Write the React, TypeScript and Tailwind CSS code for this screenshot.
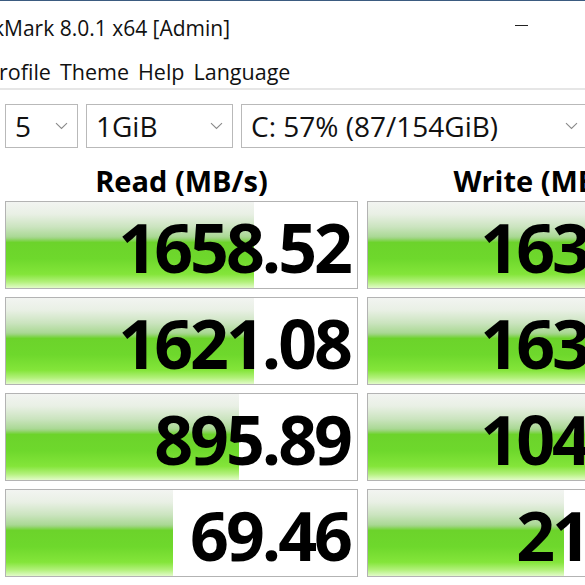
import React from 'react';

const ui = { fontFamily: '"Open Sans", "Noto Sans", sans-serif' };

interface Score {
  value: string;
  fill: number; // px width of the green bar
}

const readScores: Score[] = [
  { value: '1658.52', fill: 248 },
  { value: '1621.08', fill: 248 },
  { value: '895.89', fill: 233 },
  { value: '69.46', fill: 167 },
];

const writeScores: Score[] = [
  { value: '1634.87', fill: 351 },
  { value: '1632.15', fill: 351 },
  { value: '1048.73', fill: 351 },
  { value: '218.64', fill: 196 },
];

const Chevron = () => (
  <svg width="13" height="8" viewBox="0 0 13 8" className="shrink-0">
    <path d="M1 1.2 L6.5 6.5 L12 1.2" fill="none" stroke="#8a8a8a" strokeWidth="1.1" />
  </svg>
);

const Combo = ({ label, className }: { label: string; className: string }) => (
  <div
    className={`flex h-[44px] items-center justify-between border border-[#b9b9b9] bg-white pl-[9px] pr-[9px] ${className}`}
  >
    <span className="text-[28px] leading-none text-[#111]">{label}</span>
    <Chevron />
  </div>
);

const Cell = ({ score }: { score: Score }) => (
  <div className="relative flex h-[88px] w-[353px] items-center justify-end overflow-hidden border border-[#b3b3b3] bg-white">
    <div
      className="absolute inset-y-0 left-0 bg-[linear-gradient(to_bottom,#f2f4f1_0%,#e9f0e5_14%,#cbe4bf_29%,#abd996_40%,#9fd583_42%,#6cd32b_47%,#6ed82c_66%,#84e53a_84%,#b3f17c_93%,#e2fbc9_100%)]"
      style={{ width: score.fill }}
    />
    <span className="relative pr-[7px] pt-[4px] text-[68px] font-bold leading-none tracking-[-3px] text-black">
      {score.value}
    </span>
  </div>
);

export default function App() {
  return (
    <div className="relative h-[585px] w-[585px] overflow-hidden bg-white" style={ui}>
      <div className="h-px w-full bg-[#3b5b80]" />

      <div className="flex h-[49px] w-[585px] items-center justify-between pt-[6px]">
        <div className="flex items-center text-[21px] text-[#111]">
          <span className="inline-flex w-[4px] justify-end overflow-hidden">k</span>
          <span>Mark 8.0.1 x64 [Admin]</span>
        </div>
        <div className="mr-[57px] mb-[6px] h-px w-[13px] bg-[#222]" />
      </div>

      <div className="flex h-[38px] items-center gap-[9px] pt-[6px] text-[21.5px] text-[#111]">
        <span className="-ml-[1px]">rofile</span>
        <span>Theme</span>
        <span>Help</span>
        <span>Language</span>
      </div>

      <div className="h-[2px] w-full bg-[#e6e6e6]" />

      <div className="flex w-[760px] gap-[8px] pl-[5px] pt-[14px]">
        <Combo label="5" className="w-[73px]" />
        <Combo label="1GiB" className="w-[147px]" />
        <Combo label="C: 57% (87/154GiB)" className="w-[347px]" />
      </div>

      <div className="flex w-[760px] gap-[9px] pl-[5px] pt-[12px]">
        {[
          { title: 'Read (MB/s)', scores: readScores },
          { title: 'Write (MB/s)', scores: writeScores },
        ].map((col) => (
          <div key={col.title} className="flex w-[353px] flex-col">
            <div className="flex h-[41px] items-center justify-center text-[29px] font-bold leading-none text-black">
              {col.title}
            </div>
            <div className="flex flex-col gap-[8px]">
              {col.scores.map((s) => (
                <Cell key={s.value} score={s} />
              ))}
            </div>
          </div>
        ))}
      </div>
    </div>
  );
}
